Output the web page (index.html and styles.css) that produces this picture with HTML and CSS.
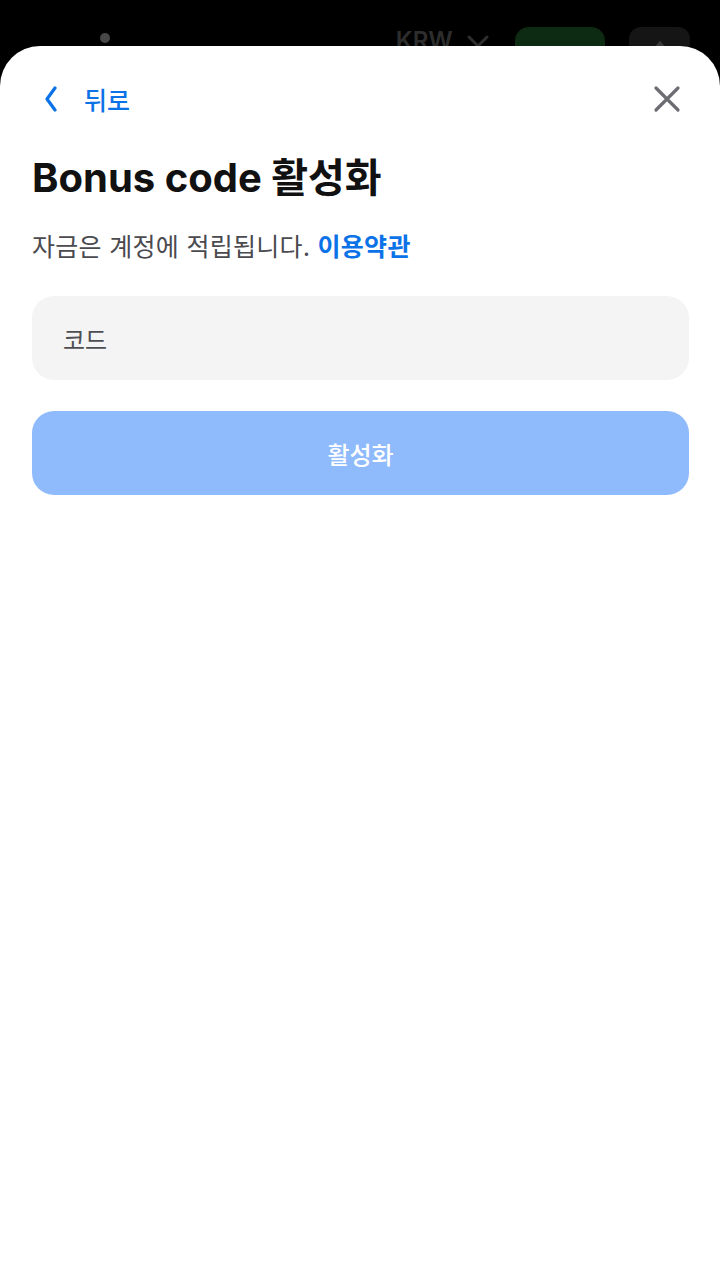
FILE: index.html
```html
<!DOCTYPE html>
<html lang="ko">
<head>
<meta charset="utf-8">
<meta name="viewport" content="width=720">
<title>Bonus code 활성화</title>
<link rel="stylesheet" href="styles.css">
</head>
<body>
<div class="topbar">
  <span class="dot"></span>
  <span class="currency">KRW
    <svg class="cur-chev" width="22" height="14" viewBox="0 0 22 14"><path d="M2 2 L11 11 L20 2" fill="none" stroke="#2e2e2e" stroke-width="3" stroke-linecap="round" stroke-linejoin="round"/></svg>
  </span>
  <span class="deposit"></span>
  <span class="account"><svg width="16" height="12" viewBox="0 0 16 12" class="acc-icon"><path d="M3 10 L8 4 L13 10" fill="none" stroke="#3a3a3a" stroke-width="3"/></svg></span>
</div>
<main class="sheet">
  <div class="nav">
    <button class="back">
      <svg width="14" height="26" viewBox="0 0 14 26"><path d="M11 2 L3 13 L11 24" fill="none" stroke="#0b72e7" stroke-width="3.2" stroke-linecap="round" stroke-linejoin="round"/></svg>
      <span>뒤로</span>
    </button>
    <button class="close" aria-label="닫기">
      <svg width="28" height="28" viewBox="0 0 28 28"><path d="M3 3 L25 25 M25 3 L3 25" stroke="#6c6c73" stroke-width="3.2" stroke-linecap="round"/></svg>
    </button>
  </div>
  <h1 class="title">Bonus code 활성화</h1>
  <p class="subtitle">자금은 계정에 적립됩니다. <a class="link" href="#">이용약관</a></p>
  <input class="code" type="text" placeholder="코드">
  <button class="activate">활성화</button>
</main>
</body>
</html>
```

FILE: styles.css
```css
* { box-sizing: border-box; }
html, body { margin: 0; padding: 0; }
body {
  background: #000;
  font-family: Inter, "Noto Sans CJK KR", "Noto Sans", sans-serif;
  width: 720px;
  height: 1280px;
  overflow: hidden;
}
.topbar {
  height: 46px;
  overflow: hidden;
  display: flex;
  align-items: flex-start;
  padding: 27px 30px 0 100px;
}
.dot {
  width: 10px;
  height: 10px;
  border-radius: 50%;
  background: #474747;
  margin-top: 6px;
}
.currency {
  margin-left: 286px;
  display: flex;
  align-items: center;
  gap: 14px;
  font-family: Inter, "Noto Sans", sans-serif;
  font-weight: 600;
  font-size: 24px;
  color: #2d2d2d;
  margin-top: -1px;
  line-height: 30px;
}
.cur-chev { margin-top: 2px; }
.deposit {
  margin-left: 26px;
  width: 92px;
  height: 60px;
  border-radius: 14px;
  background: #0d2a12;
}
.account {
  margin-left: 24px;
  width: 62px;
  height: 60px;
  border-radius: 12px;
  background: #151515;
  display: flex;
  justify-content: center;
  padding-top: 12px;
}
.sheet {
  background: #fff;
  border-radius: 40px 40px 0 0;
  height: 1234px;
  padding: 28px 31px 0 32px;
}
.nav {
  display: flex;
  justify-content: space-between;
  align-items: center;
  height: 50px;
}
.back, .close {
  border: 0;
  background: none;
  padding: 0;
  display: flex;
  align-items: center;
  cursor: pointer;
}
.back {
  gap: 26px;
  margin-left: 12px;
  color: #0b72e7;
  font-family: "Noto Sans CJK KR", sans-serif;
  font-size: 25px;
  font-weight: 500;
}
.close { margin-right: 8px; }
.title {
  margin: 26px 0 0;
  font-size: 40px;
  font-weight: 700;
  letter-spacing: 0;
  color: #111;
  line-height: 56px;
}
.subtitle {
  margin: 21px 0 0;
  font-size: 25px;
  letter-spacing: 0.3px;
  color: #4a4a4f;
  line-height: 36px;
  font-family: "Noto Sans CJK KR", sans-serif;
}
.link {
  color: #0b72e7;
  font-weight: 700;
  text-decoration: none;
}
.code {
  display: block;
  width: 100%;
  height: 84px;
  margin-top: 33px;
  border: 0;
  border-radius: 22px;
  background: #f4f4f5;
  padding: 0 31px;
  font-family: "Noto Sans CJK KR", sans-serif;
  font-size: 24px;
  color: #333;
  outline: none;
}
.code::placeholder { color: #4e4e52; }
.activate {
  display: block;
  width: 100%;
  height: 84px;
  margin-top: 31px;
  border: 0;
  border-radius: 22px;
  background: #8fbbfd;
  color: #fff;
  font-family: "Noto Sans CJK KR", sans-serif;
  font-size: 24px;
  font-weight: 500;
}
```
